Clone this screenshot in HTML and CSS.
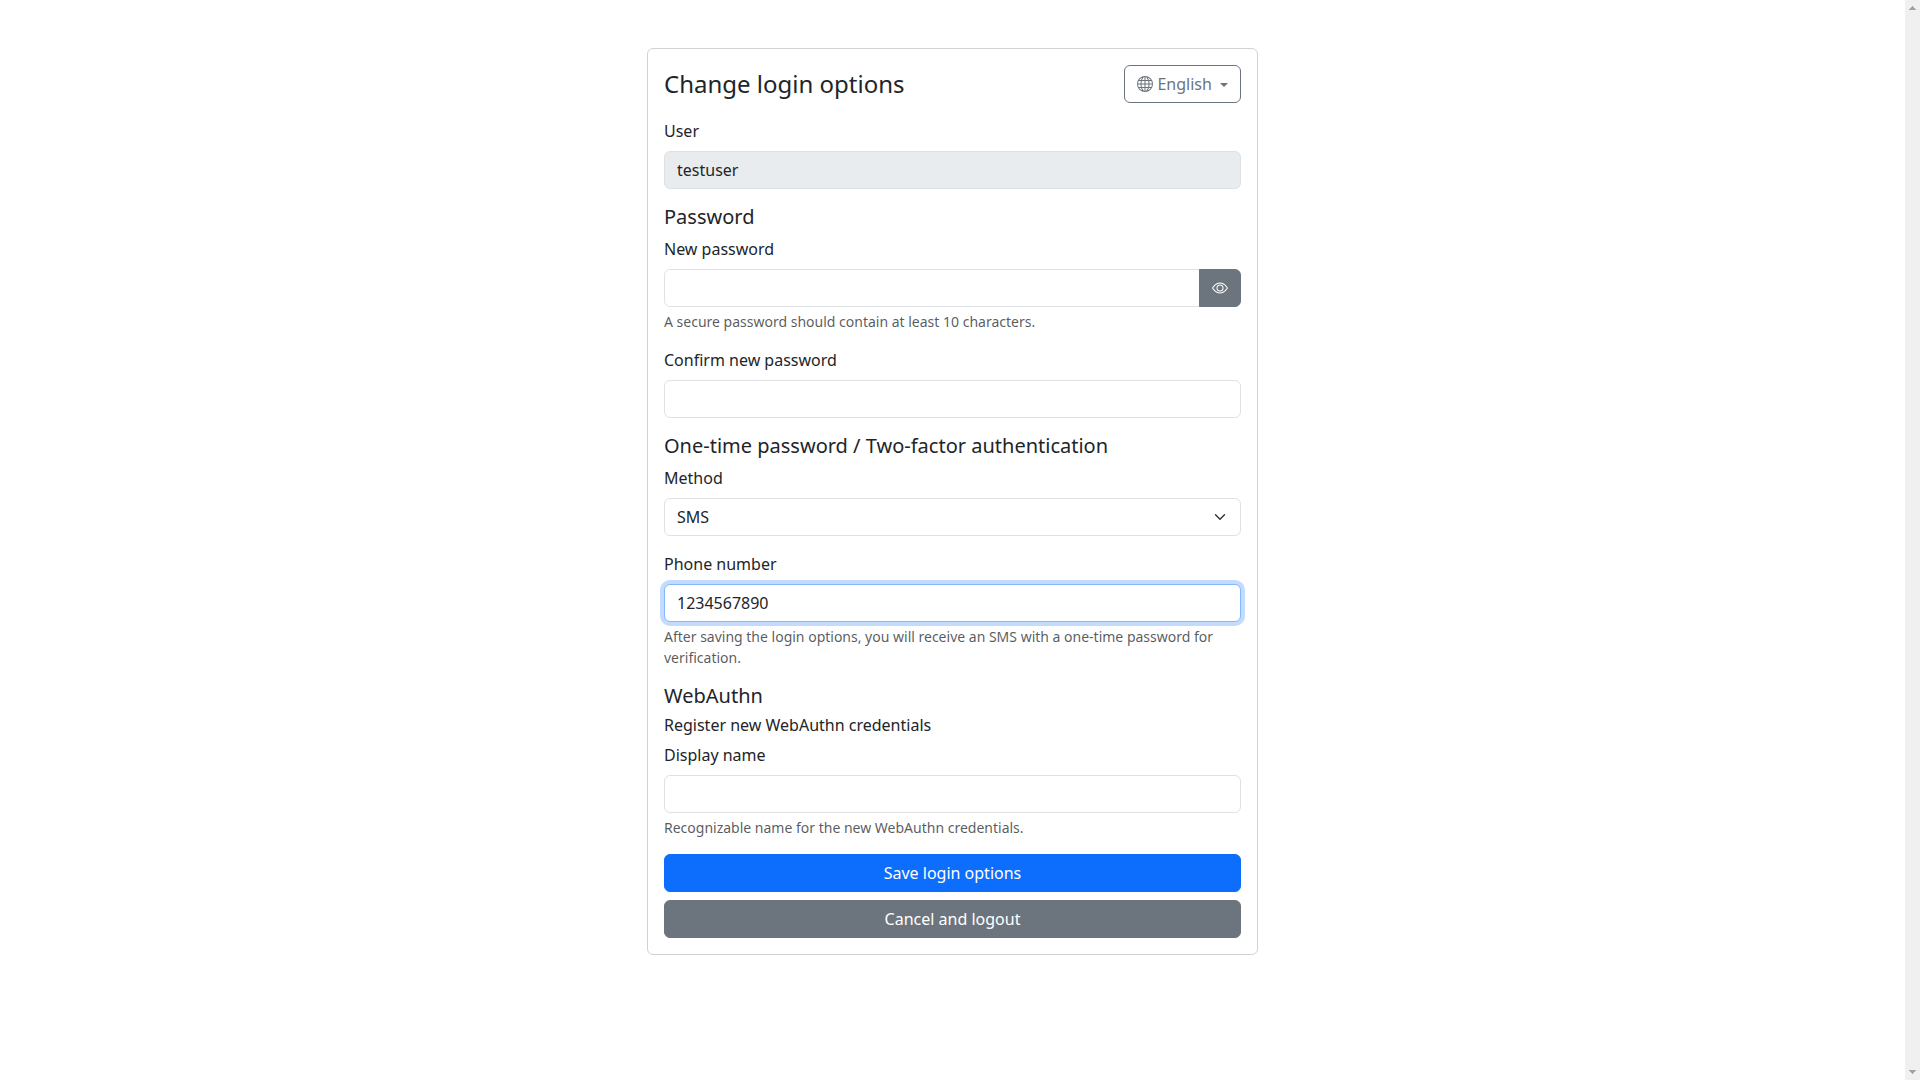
FILE: index.html
```
<!DOCTYPE html>
<html lang="en">
<head>
  <meta charset="UTF-8">
  <meta name="viewport" content="width=device-width, initial-scale=1">
  <title>Change login options</title>
  <link rel="stylesheet" href="styles.css">
</head>
<body>
  <main class="page">
    <div class="card">
      <div class="card-header">
        <h1>Change login options</h1>
        <button type="button" class="btn btn-outline dropdown-toggle" aria-haspopup="true">
          <svg class="icon" viewBox="0 0 16 16" fill="currentColor" aria-hidden="true">
            <path d="M0 8a8 8 0 1 1 16 0A8 8 0 0 1 0 8m7.5-6.923c-.67.204-1.335.82-1.887 1.855A8 8 0 0 0 5.145 4H7.5zM4.09 4a9.3 9.3 0 0 1 .64-1.539 7 7 0 0 1 .597-.933A7.03 7.03 0 0 0 2.255 4zm-.582 3.5c.03-.877.138-1.718.312-2.5H1.674a7 7 0 0 0-.656 2.5zM4.847 5a12.5 12.5 0 0 0-.338 2.5H7.5V5zM8.5 5v2.5h2.99a12.5 12.5 0 0 0-.337-2.5zM4.51 8.5a12.5 12.5 0 0 0 .337 2.5H7.5V8.5zm3.99 0V11h2.653c.187-.765.306-1.608.338-2.5zM5.145 12q.208.58.468 1.068c.552 1.035 1.218 1.65 1.887 1.855V12zm.182 2.472a7 7 0 0 1-.597-.933A9.3 9.3 0 0 1 4.09 12H2.255a7 7 0 0 0 3.072 2.472M3.82 11a13.7 13.7 0 0 1-.312-2.5h-2.49c.062.89.291 1.733.656 2.5zm6.853 3.472A7 7 0 0 0 13.745 12H11.91a9.3 9.3 0 0 1-.64 1.539 7 7 0 0 1-.597.933M8.5 12v2.923c.67-.204 1.335-.82 1.887-1.855q.26-.487.468-1.068zm3.68-1h2.146c.365-.767.594-1.61.656-2.5h-2.49a13.7 13.7 0 0 1-.312 2.5m2.802-3.5a7 7 0 0 0-.656-2.5H12.18c.174.782.282 1.623.312 2.5zM11.27 2.461c.247.464.462.98.64 1.539h1.835a7 7 0 0 0-3.072-2.472c.218.284.418.598.597.933M10.855 4a8 8 0 0 0-.468-1.068C9.835 1.897 9.17 1.282 8.5 1.077V4z"/>
          </svg>
          English
        </button>
      </div>

      <form>
        <div class="field">
          <label for="user">User</label>
          <input type="text" class="form-control" id="user" value="testuser" disabled>
        </div>

        <h2>Password</h2>
        <div class="field">
          <label for="newPassword">New password</label>
          <div class="input-group">
            <input type="password" class="form-control" id="newPassword" autocomplete="new-password">
            <button type="button" class="btn btn-secondary" id="togglePassword" aria-label="Show password">
              <svg class="icon" viewBox="0 0 16 16" fill="currentColor" aria-hidden="true">
                <path d="M16 8s-3-5.5-8-5.5S0 8 0 8s3 5.5 8 5.5S16 8 16 8M1.173 8a13 13 0 0 1 1.66-2.043C4.12 4.668 5.88 3.5 8 3.5s3.879 1.168 5.168 2.457A13 13 0 0 1 14.828 8q-.086.13-.195.288c-.335.48-.83 1.12-1.465 1.755C11.879 11.332 10.119 12.5 8 12.5s-3.879-1.168-5.168-2.457A13 13 0 0 1 1.172 8z"/>
                <path d="M8 5.5a2.5 2.5 0 1 0 0 5 2.5 2.5 0 0 0 0-5M4.5 8a3.5 3.5 0 1 1 7 0 3.5 3.5 0 0 1-7 0"/>
              </svg>
            </button>
          </div>
          <div class="form-text">A secure password should contain at least 10 characters.</div>
        </div>
        <div class="field">
          <label for="confirmPassword">Confirm new password</label>
          <input type="password" class="form-control" id="confirmPassword" autocomplete="new-password">
        </div>

        <h2>One-time password / Two-factor authentication</h2>
        <div class="field">
          <label for="method">Method</label>
          <select class="form-control form-select" id="method">
            <option selected>SMS</option>
          </select>
        </div>
        <div class="field">
          <label for="phone">Phone number</label>
          <input type="text" class="form-control focused" id="phone" value="1234567890">
          <div class="form-text">After saving the login options, you will receive an SMS with a one-time password for verification.</div>
        </div>

        <h2>WebAuthn</h2>
        <h3>Register new WebAuthn credentials</h3>
        <div class="field">
          <label for="displayName">Display name</label>
          <input type="text" class="form-control" id="displayName">
          <div class="form-text">Recognizable name for the new WebAuthn credentials.</div>
        </div>

        <div class="actions">
          <button type="submit" class="btn btn-primary">Save login options</button>
          <button type="button" class="btn btn-secondary">Cancel and logout</button>
        </div>
      </form>
    </div>
  </main>

  <div class="scrollbar" aria-hidden="true">
    <svg width="7" height="4" viewBox="0 0 7 4" shape-rendering="crispEdges">
      <path fill="#a3a3a3" d="M3 0h1v1h1v1h1v1h1v1H0V3h1V2h1V1h1z"/>
    </svg>
    <svg width="7" height="4" viewBox="0 0 7 4" shape-rendering="crispEdges">
      <path fill="#a3a3a3" d="M0 0h7v1H6v1H5v1H4v1H3V3H2V2H1V1H0z"/>
    </svg>
  </div>
</body>
</html>
```
FILE: styles.css
```
* {
  box-sizing: border-box;
}
body {
  display: flex;
  min-height: 100vh;
  margin: 0;
  background: #fff;
  color: #212529;
  font-family: "Noto Sans", "Liberation Sans", Arial, sans-serif;
  font-size: 16px;
  line-height: 24px;
}
.page {
  display: grid;
  flex: 1;
  grid-template-columns: calc(100% / 3);
  justify-content: center;
  align-items: start;
  padding: 48px 0;
}
.card {
  margin: 0 12px;
  padding: 16px;
  border: 1px solid rgba(0, 0, 0, 0.175);
  border-radius: 6px;
}
.card-header {
  display: flex;
  justify-content: space-between;
  align-items: center;
  margin-bottom: 16px;
}
h1, h2, h3 {
  margin: 0 0 8px;
  font-weight: 400;
}
h1 {
  margin: 0;
  font-size: 24px;
  line-height: 28px;
}
h2 {
  font-size: 20px;
  line-height: 24px;
}
h3 {
  font-size: 16px;
  line-height: 19px;
}
.icon {
  width: 16px;
  height: 16px;
  vertical-align: -2px;
}

/* Form fields */
.field {
  margin-bottom: 16px;
}
label {
  display: block;
  margin-bottom: 8px;
}
.form-control {
  display: block;
  width: 100%;
  height: 38px;
  padding: 6px 12px;
  border: 1px solid #dee2e6;
  border-radius: 6px;
  background-color: #fff;
  color: #212529;
  font: inherit;
  appearance: none;
}
.form-control:disabled {
  background-color: #e9ecef;
  opacity: 1;
}
.form-control:focus,
.form-control.focused {
  border-color: #86b7fe;
  outline: 0;
  box-shadow: 0 0 0 4px rgba(13, 110, 253, 0.25);
}
.form-select {
  padding-right: 36px;
  background-image: url("data:image/svg+xml,%3csvg xmlns='http://www.w3.org/2000/svg' viewBox='0 0 16 16'%3e%3cpath fill='none' stroke='%23343a40' stroke-linecap='round' stroke-linejoin='round' stroke-width='2' d='m2 5 6 6 6-6'/%3e%3c/svg%3e");
  background-repeat: no-repeat;
  background-position: right 12px center;
  background-size: 16px 12px;
}
.form-text {
  margin-top: 4px;
  color: rgba(33, 37, 41, 0.75);
  font-size: 14px;
  line-height: 21px;
}
.input-group {
  display: flex;
}
.input-group .form-control {
  flex: 1;
  min-width: 0;
  border-radius: 6px 0 0 6px;
}
.input-group .btn {
  margin-left: -1px;
  border-radius: 0 6px 6px 0;
}

/* Buttons */
.btn {
  padding: 6px 12px;
  border: 1px solid transparent;
  border-radius: 6px;
  font: inherit;
  text-align: center;
  cursor: pointer;
}
.btn-primary {
  background: #0d6efd;
  border-color: #0d6efd;
  color: #fff;
}
.btn-secondary {
  background: #6c757d;
  border-color: #6c757d;
  color: #fff;
}
.btn-outline {
  background: transparent;
  border-color: #6c757d;
  color: #6c757d;
}
.dropdown-toggle {
  white-space: nowrap;
}
.dropdown-toggle::after {
  content: "";
  display: inline-block;
  margin-left: 4px;
  vertical-align: 3px;
  border-top: 4px solid;
  border-right: 4px solid transparent;
  border-left: 4px solid transparent;
}
.actions {
  display: grid;
  gap: 8px;
}

/* Scroll track on the right edge */
.scrollbar {
  display: flex;
  flex-direction: column;
  justify-content: space-between;
  align-items: center;
  width: 15px;
  padding: 6px 0;
  background: #f0f0f0;
}
```
